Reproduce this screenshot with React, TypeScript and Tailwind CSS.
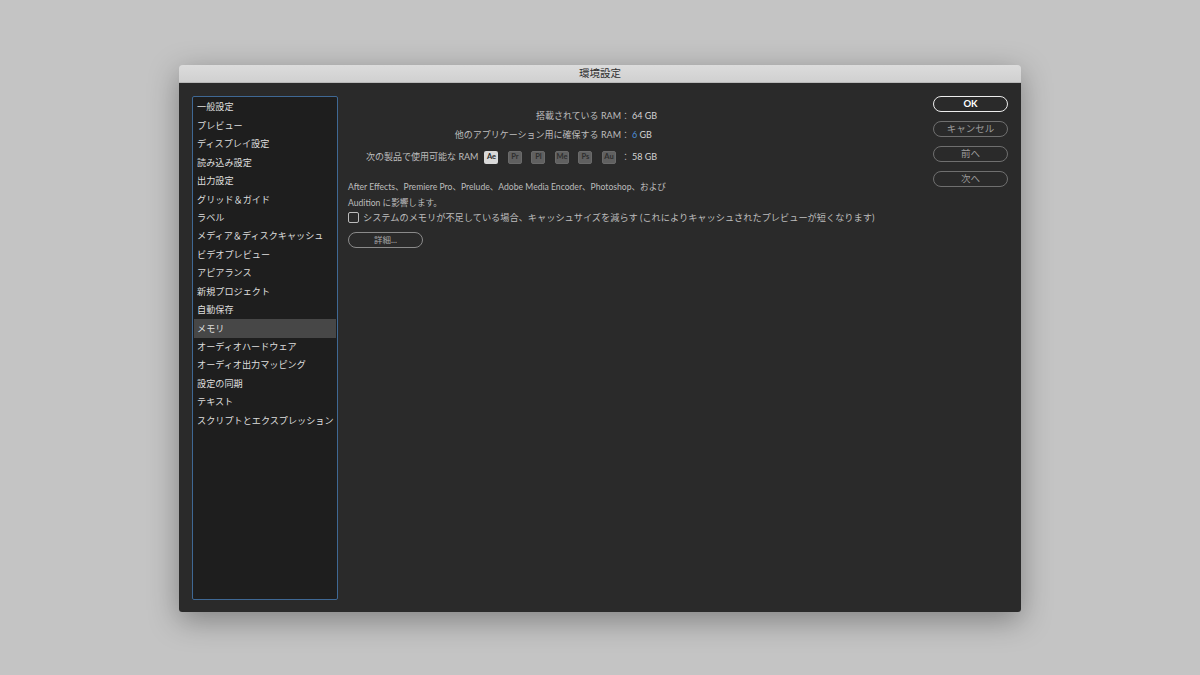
import React from 'react';

const font = { fontFamily: 'Lato, "Noto Sans CJK JP", "Noto Sans", sans-serif' };

const categories = [
  '一般設定',
  'プレビュー',
  'ディスプレイ設定',
  '読み込み設定',
  '出力設定',
  'グリッド＆ガイド',
  'ラベル',
  'メディア＆ディスクキャッシュ',
  'ビデオプレビュー',
  'アピアランス',
  '新規プロジェクト',
  '自動保存',
  'メモリ',
  'オーディオハードウェア',
  'オーディオ出力マッピング',
  '設定の同期',
  'テキスト',
  'スクリプトとエクスプレッション',
];

const products = ['Ae', 'Pr', 'Pl', 'Me', 'Ps', 'Au'];

const DialogButton: React.FC<{ label: string; primary?: boolean }> = ({ label, primary }) => (
  <button
    className={`h-[16px] w-[75px] rounded-full flex items-center justify-center text-[9.5px] leading-none ${
      primary
        ? 'border-[1.5px] border-[#ececec] text-white font-bold'
        : 'border-[1.5px] border-[#6f6f6f] text-[#9c9c9c]'
    }`}
  >
    {label}
  </button>
);

export default function App() {
  return (
    <div style={font} className="w-[1200px] h-[675px] bg-[#c4c4c4] flex items-center justify-center">
      <div className="mt-[2px] w-[842px] h-[547px] flex flex-col rounded-t-[4px] rounded-b-[3px] overflow-hidden shadow-[0_8px_30px_rgba(0,0,0,0.35)]">
        {/* title bar */}
        <div className="h-[18px] shrink-0 bg-gradient-to-b from-[#dcdcdc] to-[#d0d0d0] border-b border-[#b8b8b8] flex items-center justify-center">
          <span className="text-[10.5px] text-[#2e2e2e]">環境設定</span>
        </div>

        {/* body */}
        <div className="flex-1 bg-[#2a2a2a] flex px-[13px] pt-[13px] pb-[12px]">
          {/* category list */}
          <div className="w-[146px] shrink-0 bg-[#1e1e1e] border border-[#3f6894] rounded-[2px] flex flex-col p-px">
            {categories.map((c) => (
              <div
                key={c}
                className={`h-[18.45px] shrink-0 flex items-center pl-[3px] text-[9.15px] text-[#dedede] whitespace-nowrap ${
                  c === 'メモリ' ? 'bg-[#474747]' : ''
                }`}
              >
                {c}
              </div>
            ))}
          </div>

          {/* main content */}
          <div className="flex-1 ml-[10px] flex flex-col text-[9px] text-[#bdbdbd]">
            <div className="mt-[11px] h-[18px] flex items-center">
              <div className="w-[282px] flex justify-end">搭載されている RAM：</div>
              <span className="ml-[2px] text-[#d4d4d4]">64 GB</span>
            </div>
            <div className="mt-[1px] h-[18px] flex items-center">
              <div className="w-[282px] flex justify-end">他のアプリケーション用に確保する RAM：</div>
              <span className="ml-[2px] text-[#d4d4d4]">
                <span className="text-[#4d8fd6]">6</span> GB
              </span>
            </div>
            <div className="mt-[4px] h-[18px] flex items-center">
              <div className="w-[282px] flex justify-end items-center">
                <span>次の製品で使用可能な RAM</span>
                <div className="ml-[6px] mr-[5px] flex items-center gap-[9.5px]">
                  {products.map((p) => (
                    <div
                      key={p}
                      className={`w-[14px] h-[13px] rounded-[2px] flex items-center justify-center text-[7.5px] font-bold leading-none ${
                        p === 'Ae'
                          ? 'bg-[#d9d9d9] text-[#2a2a2a]'
                          : 'bg-[#606060] text-[#2e2e2e] border border-[#6a6a6a]'
                      }`}
                    >
                      {p}
                    </div>
                  ))}
                </div>
                <span>：</span>
              </div>
              <span className="ml-[2px] text-[#d4d4d4]">58 GB</span>
            </div>

            <div className="mt-[13px] h-[17px] flex items-center text-[8.6px]">
              After Effects、Premiere Pro、Prelude、Adobe Media Encoder、Photoshop、および
            </div>
            <div className="h-[15px] flex items-center text-[8.6px]">Audition に影響します。</div>
            <div className="h-[13px] flex items-center">
              <div className="w-[11px] h-[11px] border border-[#bcbcbc] rounded-[2px]" />
              <span className="ml-[4px] text-[9.2px] whitespace-nowrap">
                システムのメモリが不足している場合、キャッシュサイズを減らす (これによりキャッシュされたプレビューが短くなります)
              </span>
            </div>
            <div className="mt-[8px]">
              <button className="w-[75px] h-[16px] rounded-full border-[1.5px] border-[#8a8a8a] text-[8.5px] text-[#a8a8a8] flex items-center justify-center leading-none">
                詳細...
              </button>
            </div>
          </div>

          {/* dialog buttons */}
          <div className="w-[75px] shrink-0 flex flex-col gap-[9px]">
            <DialogButton label="OK" primary />
            <DialogButton label="キャンセル" />
            <DialogButton label="前へ" />
            <DialogButton label="次へ" />
          </div>
        </div>
      </div>
    </div>
  );
}
